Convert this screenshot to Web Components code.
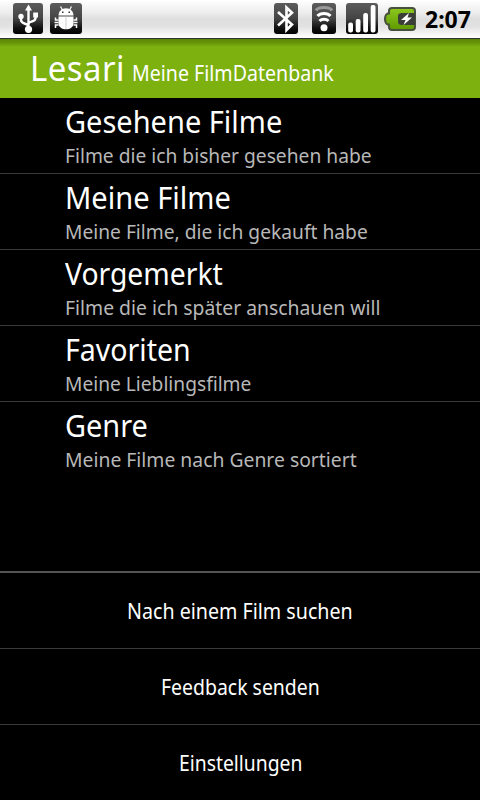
<!DOCTYPE html>
<html lang="de">
<head>
<meta charset="utf-8">
<title>Lesari</title>
<style>
  body {
    margin: 0;
    background: #000;
    font-family: "Noto Sans", "Open Sans", sans-serif;
  }
</style>
</head>
<body>
<lesari-app></lesari-app>
<script>
// Text squeezed or stretched to a given advance width
class FitText extends HTMLElement {
  constructor() {
    super();
    this.attachShadow({ mode: "open" }).innerHTML = `
      <style>
        :host { display: block; white-space: nowrap; }
        span { display: inline-block; transform-origin: 0 50%; }
      </style>
      <span><slot></slot></span>
    `;
  }
  connectedCallback() {
    const width = Number(this.getAttribute("width"));
    const span = this.shadowRoot.querySelector("span");
    this.style.width = width + "px";
    span.style.transform = `scaleX(${width / span.offsetWidth})`;
  }
}

const icons = {
  usb: [30, `
    <g fill="none" stroke="#fff" stroke-width="2.4">
      <path d="M15.500 26V6M15.500 23.500C15.500 20 8 21.500 8 17V13M15.500 21C15.500 18 22.500 19.500 22.500 15V11"/>
    </g>
    <path d="M15.500 1.500L19 7.500H12zM20.200 9.500h4.800v5h-4.800z" fill="#fff"/>
    <circle cx="8" cy="13.500" r="2.700" fill="#fff"/>
    <circle cx="15.500" cy="26.300" r="3.600" fill="#fff"/>`],
  debug: [32, `
    <path d="M8.500 12.500C8.500 8 12 5.200 16 5.200S23.500 8 23.500 12.500z" fill="#fff"/>
    <path d="M10.500 3.500L12.500 7M21.500 3.500L19.500 7" stroke="#fff" stroke-width="1.200"/>
    <path d="M8.500 13.500H23.500V20.500C23.500 24 20 26.300 16 26.300S8.500 24 8.500 20.500z" fill="#fff"/>
    <path d="M16 13.500V26" stroke="#ccc" stroke-width="1"/>
    <path d="M8.500 17H5.500V14.500M8.500 19.500H4.500M8.500 22H5.500V25M23.500 17H26.500V14.500M23.500 19.500H27.500M23.500 22H26.500V25" fill="none" stroke="#fff" stroke-width="1.500"/>
    <path d="M12 8.500h1.500V10H12zM18.500 8.500H20V10h-1.500z" fill="#333"/>`],
  bluetooth: [24, `
    <path d="M4 9L18 21.500L12.500 27V4.500L18 9.800L4 22.500" fill="none" stroke="#fff" stroke-width="2.600"/>`],
  wifi: [24, `
    <g fill="none" stroke-width="3">
      <path d="M4 7.500C6 3.500 18 3.500 20 7.500" stroke="#999"/>
      <path d="M5.500 13C8.500 9.500 15.500 9.500 18.500 13M7.500 18C10 15.500 14 15.500 16.500 18" stroke="#fff"/>
    </g>
    <circle cx="12" cy="24.800" r="3.500" fill="#fff"/>`],
  signal: [32, `
    <g fill="#fff">
      <rect x="2.200" y="19.500" width="4.800" height="10" rx="2"/>
      <rect x="9.700" y="16" width="4.800" height="13.500" rx="2"/>
      <rect x="17.200" y="10" width="4.800" height="19.500" rx="2"/>
      <rect x="24.700" y="2" width="4.800" height="27.500" rx="2"/>
    </g>`]
};

class StatusIcon extends HTMLElement {
  connectedCallback() {
    const [width, shape] = icons[this.getAttribute("name")];
    this.attachShadow({ mode: "open" }).innerHTML = `
      <style>
        :host {
          display: block;
          height: 31px;
          border-radius: 3px;
          background: linear-gradient(#5c5c5c, #444 50%, #111 80%, #000);
        }
        svg { display: block; }
      </style>
      <svg width="${width}" height="31" viewBox="0 0 ${width} 31">${shape}</svg>
    `;
  }
}

class BatteryIcon extends HTMLElement {
  constructor() {
    super();
    this.attachShadow({ mode: "open" }).innerHTML = `
      <style>
        :host { display: block; }
        svg { display: block; }
      </style>
      <svg width="32" height="24" viewBox="0 0 32 24">
        <defs>
          <linearGradient id="fill" x2="0" y2="1">
            <stop offset="0" stop-color="#8cc81e"/>
            <stop offset="1" stop-color="#5f9a00"/>
          </linearGradient>
        </defs>
        <path d="M8 1H28Q31 1 31 4V20Q31 23 28 23H8Q5 23 5 20V17.500H3.500Q1 16 1 12T3.500 6.500H5V4Q5 1 8 1z" fill="url(#fill)" stroke="#46503c" stroke-width="2"/>
        <path d="M31 6H18Q14 6 14 9V15Q14 18 18 18H31z" fill="#3b3e38"/>
        <path d="M25 6L17 13H21.500L19.500 18L28 10.500H23.500z" fill="#fff"/>
      </svg>
    `;
  }
}

class StatusBar extends HTMLElement {
  constructor() {
    super();
    this.attachShadow({ mode: "open" }).innerHTML = `
      <style>
        :host {
          display: flex;
          box-sizing: border-box;
          height: 39px;
          padding: 3px 9px 0 13px;
          border-bottom: 1px solid #333;
          background: linear-gradient(#fff, #ececec 35%, #dedede 50%, #e2e2e2 70%, #f8f8f8 92%, #fff);
          color: #000;
        }
        .left, .right { display: flex; }
        .left { gap: 7px; }
        .right { margin-left: auto; }
        .wifi { margin-left: 14px; }
        .signal { margin-left: 10px; }
        battery-icon { margin: 4px 9px 0 6px; }
        fit-text { font: bold 23px/32px "Noto Sans", sans-serif; }
      </style>
      <div class="left">
        <status-icon name="usb"></status-icon>
        <status-icon name="debug"></status-icon>
      </div>
      <div class="right">
        <status-icon name="bluetooth"></status-icon>
        <status-icon class="wifi" name="wifi"></status-icon>
        <status-icon class="signal" name="signal"></status-icon>
        <battery-icon></battery-icon>
        <fit-text width="46">2:07</fit-text>
      </div>
    `;
  }
}

class TitleBar extends HTMLElement {
  constructor() {
    super();
    this.attachShadow({ mode: "open" }).innerHTML = `
      <style>
        :host {
          display: flex;
          align-items: baseline;
          box-sizing: border-box;
          height: 59px;
          padding: 4px 0 0 30px;
          gap: 7px;
          background: linear-gradient(#5b8705, #638f08 3px, #7db110 8px);
          color: #fff;
        }
        .name { font-size: 35px; line-height: 50px; letter-spacing: .5px; }
        .sub { font-size: 22px; }
      </style>
      <fit-text class="name" width="95"><slot name="name"></slot></fit-text>
      <fit-text class="sub" width="202"><slot></slot></fit-text>
    `;
  }
}

class MenuRow extends HTMLElement {
  connectedCallback() {
    this.attachShadow({ mode: "open" }).innerHTML = `
      <style>
        :host {
          display: block;
          box-sizing: border-box;
          height: 76px;
          padding: 3px 0 0 65px;
          border-bottom: 1px solid #3a3a3a;
        }
        :host(:last-of-type) { border-bottom-color: transparent; }
        .title { color: #fff; font-size: 31px; line-height: 40px; }
        .sub { margin-top: 1px; color: #b8b8b8; font-size: 20px; line-height: 28px; }
      </style>
      <fit-text class="title" width="${this.getAttribute("title-width")}"><slot name="title"></slot></fit-text>
      <fit-text class="sub" width="${this.getAttribute("sub-width")}"><slot></slot></fit-text>
    `;
  }
}

class ActionRow extends HTMLElement {
  connectedCallback() {
    this.attachShadow({ mode: "open" }).innerHTML = `
      <style>
        :host {
          display: flex;
          justify-content: center;
          box-sizing: border-box;
          height: 76px;
          border-bottom: 1px solid #3a3a3a;
          color: #fff;
          font-size: 22px;
          line-height: 74px;
        }
        :host(:last-of-type) { height: 75px; border-bottom: 0; }
      </style>
      <fit-text width="${this.getAttribute("width")}"><slot></slot></fit-text>
    `;
  }
}

class LesariApp extends HTMLElement {
  constructor() {
    super();
    this.attachShadow({ mode: "open" }).innerHTML = `
      <style>
        :host {
          display: flex;
          flex-direction: column;
          width: 480px;
          height: 800px;
          overflow: hidden;
          background: #000;
        }
        .menu { flex: 1; }
        .actions { border-top: 2px solid #555; }
      </style>
      <status-bar></status-bar>
      <title-bar><span slot="name">Lesari</span>Meine FilmDatenbank</title-bar>
      <div class="menu">
        <menu-row title-width="217" sub-width="306.5"><span slot="title">Gesehene Filme</span>Filme die ich bisher gesehen habe</menu-row>
        <menu-row title-width="166" sub-width="302.5"><span slot="title">Meine Filme</span>Meine Filme, die ich gekauft habe</menu-row>
        <menu-row title-width="158" sub-width="315.5"><span slot="title">Vorgemerkt</span>Filme die ich später anschauen will</menu-row>
        <menu-row title-width="126" sub-width="186"><span slot="title">Favoriten</span>Meine Lieblingsfilme</menu-row>
        <menu-row title-width="83" sub-width="292"><span slot="title">Genre</span>Meine Filme nach Genre sortiert</menu-row>
      </div>
      <div class="actions">
        <action-row width="226">Nach einem Film suchen</action-row>
        <action-row width="159">Feedback senden</action-row>
        <action-row width="123">Einstellungen</action-row>
      </div>
    `;
  }
}

customElements.define("status-icon", StatusIcon);
customElements.define("battery-icon", BatteryIcon);
customElements.define("status-bar", StatusBar);
customElements.define("title-bar", TitleBar);
customElements.define("menu-row", MenuRow);
customElements.define("action-row", ActionRow);
customElements.define("lesari-app", LesariApp);
// last, so that the slotted text is in place when it is measured
customElements.define("fit-text", FitText);
</script>
</body>
</html>
